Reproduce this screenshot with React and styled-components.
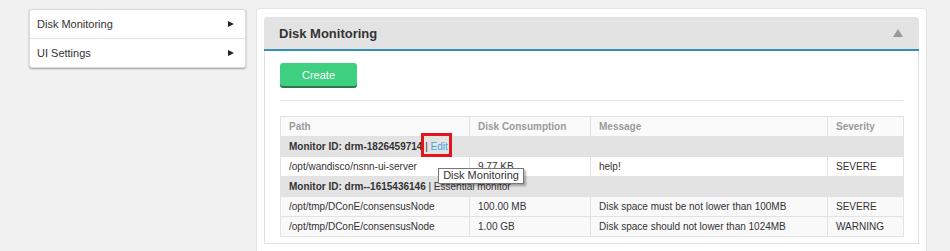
import styled, { createGlobalStyle } from "styled-components";

const GlobalStyle = createGlobalStyle`
  body {
    margin: 0;
    background: #f1f1f1;
    font-family: "Liberation Sans", Arial, sans-serif;
    color: #333;
  }
`;

const menuItems = ["Disk Monitoring", "UI Settings"];

const columns = [
  { title: "Path", width: 189 },
  { title: "Disk Consumption", width: 121 },
  { title: "Message", width: 237 },
  { title: "Severity", width: 76 },
];

const App = () => {
  return (
    <>
      <GlobalStyle />
      <Page>
        <Sidebar>
          {menuItems.map((item) => (
            <MenuItem key={item}>
              <span>{item}</span>
              <Arrow />
            </MenuItem>
          ))}
        </Sidebar>

        <Panel>
          <Box>
            <BoxHeader>
              <h2>Disk Monitoring</h2>
              <Collapse />
            </BoxHeader>
            <BoxBody>
              <Button>Create</Button>
              <Rule />
              <Table>
                <colgroup>
                  {columns.map((c) => (
                    <Col key={c.title} $width={c.width} />
                  ))}
                </colgroup>
                <thead>
                  <tr>
                    {columns.map((c) => (
                      <th key={c.title}>{c.title}</th>
                    ))}
                  </tr>
                </thead>
                <tbody>
                  <GroupRow>
                    <td colSpan={4}>
                      <b>Monitor ID: drm-1826459714</b>{" "}
                      <EditWrap>
                        | <a>Edit</a>
                        <Tooltip>Disk Monitoring</Tooltip>
                      </EditWrap>
                    </td>
                  </GroupRow>
                  <DataRow>
                    <td>/opt/wandisco/nsnn-ui-server</td>
                    <td>9.77 KB</td>
                    <td>help!</td>
                    <td>SEVERE</td>
                  </DataRow>
                  <GroupRow>
                    <td colSpan={4}>
                      <b>Monitor ID: drm--1615436146</b> | Essential monitor
                    </td>
                  </GroupRow>
                  <DataRow $striped>
                    <td>/opt/tmp/DConE/consensusNode</td>
                    <td>100.00 MB</td>
                    <td>Disk space must be not lower than 100MB</td>
                    <td>SEVERE</td>
                  </DataRow>
                  <DataRow $striped>
                    <td>/opt/tmp/DConE/consensusNode</td>
                    <td>1.00 GB</td>
                    <td>Disk space should not lower than 1024MB</td>
                    <td>WARNING</td>
                  </DataRow>
                </tbody>
              </Table>
            </BoxBody>
          </Box>
        </Panel>
      </Page>
    </>
  );
};

export default App;

const Page = styled.div`
  display: flex;
  align-items: flex-start;
  gap: 10px;
  padding: 8px 0 0 29px;
  height: 251px;
  box-sizing: border-box;
  overflow: hidden;
`;

const Sidebar = styled.div`
  width: 217px;
  margin-top: 1px;
  background: #fff;
  border: 1px solid #dcdcdc;
  border-radius: 3px;
  box-shadow: 0 1px 2px rgba(0, 0, 0, 0.35);
  box-sizing: border-box;
`;

const MenuItem = styled.div`
  display: flex;
  align-items: center;
  justify-content: space-between;
  height: 28px;
  padding: 0 11px 0 7px;
  font-size: 11px;
  color: #333;
  & + & {
    border-top: 1px solid #e2e2e2;
  }
`;

const Arrow = styled.span`
  width: 0;
  height: 0;
  border-left: 6px solid #222;
  border-top: 3.5px solid transparent;
  border-bottom: 3.5px solid transparent;
`;

const Panel = styled.div`
  width: 671px;
  height: 260px;
  background: #fff;
  border: 1px solid #e4e4e4;
  border-radius: 4px;
  padding: 8px 7px 0 7px;
  box-sizing: border-box;
`;

const Box = styled.div`
  display: flex;
  flex-direction: column;
`;

const BoxHeader = styled.div`
  display: flex;
  align-items: center;
  justify-content: space-between;
  height: 32px;
  padding: 0 16px 0 15px;
  background: #e3e3e3;
  border-bottom: 2px solid #3590b5;
  border-radius: 3px 3px 0 0;
  & > h2 {
    margin: 0;
    font-size: 13px;
    font-weight: 700;
    color: #333;
  }
`;

const Collapse = styled.span`
  width: 0;
  height: 0;
  border-bottom: 8px solid #999;
  border-left: 5px solid transparent;
  border-right: 5px solid transparent;
`;

const BoxBody = styled.div`
  border: 1px solid #e0e0e0;
  border-top: none;
  padding: 12px 15px 6px;
`;

const Button = styled.button`
  display: block;
  width: 77px;
  height: 23px;
  border: none;
  border-radius: 3px;
  background: #3ecf80;
  box-shadow: 0 2px 0 #2f7650;
  color: #fff;
  font-family: "Liberation Sans", Arial, sans-serif;
  font-size: 11px;
  cursor: pointer;
`;

const Rule = styled.div`
  height: 1px;
  margin: 14px 0 15px;
  background: #e4e4e4;
`;

const Col = styled.col`
  width: ${(p) => p.$width}px;
`;

const Table = styled.table`
  width: 100%;
  border-collapse: collapse;
  table-layout: fixed;
  font-size: 10px;
  line-height: 11px;
  color: #333;
  border: 1px solid #e2e2e2;
  & th,
  & td {
    padding: 4px 8px;
    height: 11px;
    text-align: left;
    border: 1px solid #e2e2e2;
    white-space: nowrap;
  }
  & th {
    color: #9a9a9a;
    font-weight: 700;
    background: #fafafa;
  }
`;

const GroupRow = styled.tr`
  & > td {
    background: #e3e3e3;
    border-left-color: #e3e3e3;
    border-right-color: #e3e3e3;
  }
  & b {
    font-weight: 700;
  }
`;

const DataRow = styled.tr`
  & > td {
    background: ${(p) => (p.$striped ? "#f9f9f9" : "#fff")};
  }
`;

const EditWrap = styled.span`
  position: relative;
  & > a {
    color: #3ea6d8;
  }
  &::after {
    content: "";
    position: absolute;
    left: -4px;
    top: -8px;
    width: 25px;
    height: 18px;
    border: 3px solid #e3141e;
  }
`;

const Tooltip = styled.span`
  position: absolute;
  left: 13px;
  top: 27px;
  padding: 1px 4px 2px;
  background: #fff;
  border: 1px solid #767676;
  box-shadow: 2px 2px 2px rgba(0, 0, 0, 0.3);
  font-size: 11px;
  line-height: 11px;
  color: #333;
  z-index: 2;
`;
